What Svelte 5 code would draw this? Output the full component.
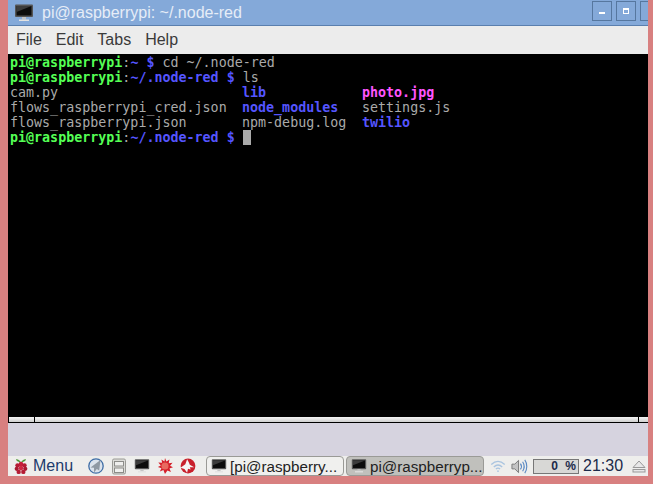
<script>
	const listing = [
		[{ t: 'cam.py' }, { t: 'lib', c: 'dir' }, { t: 'photo.jpg', c: 'img' }],
		[{ t: 'flows_raspberrypi_cred.json' }, { t: 'node_modules', c: 'dir' }, { t: 'settings.js' }],
		[{ t: 'flows_raspberrypi.json' }, { t: 'npm-debug.log' }, { t: 'twilio', c: 'dir' }]
	];
</script>

{#snippet monitor(w)}
	<svg width={w} height={w} viewBox="0 0 20 20">
		<rect x="1" y="1.500" width="18" height="12.500" rx="1" fill="#555" />
		<rect x="2.500" y="3" width="15" height="9.500" fill="#0c0c0c" />
		<path d="M2.500 3h15l-15 6z" fill="#3c3c3c" />
		<rect x="8" y="14" width="4" height="2.500" fill="#c4c4c4" />
		<rect x="5" y="16.500" width="10" height="1.500" fill="#e2e2e2" />
	</svg>
{/snippet}

<div class="desktop">
	<div class="window">
		<header class="titlebar">
			<span class="title-icon">{@render monitor(20)}</span>
			<span class="title">pi@raspberrypi: ~/.node-red</span>
			<div class="win-buttons">
				<button class="win-btn" aria-label="Minimize"><span class="min"></span></button>
				<button class="win-btn" aria-label="Maximize"><span class="max"></span></button>
				<button class="win-btn" aria-label="Close"><span class="close"></span></button>
			</div>
		</header>
		<nav class="menubar">
			<span>File</span>
			<span>Edit</span>
			<span>Tabs</span>
			<span>Help</span>
		</nav>
		<div class="terminal">
			<div class="line"><b class="green">pi@raspberrypi</b>:<b class="dir">~ $</b> cd ~/.node-red</div>
			<div class="line"><b class="green">pi@raspberrypi</b>:<b class="dir">~/.node-red $</b> ls</div>
			{#each listing as row}
				<div class="line cols">
					{#each row as cell}
						<span class={cell.c}>{cell.t}</span>
					{/each}
				</div>
			{/each}
			<div class="line"><b class="green">pi@raspberrypi</b>:<b class="dir">~/.node-red $</b> <span class="cursor"></span></div>
		</div>
		<div class="strip">
			<div class="cell first"></div>
			<div class="cell middle"></div>
			<div class="cell last"></div>
		</div>
	</div>
	<div class="gap"></div>
	<footer class="panel">
		<div class="menu-btn">
			<svg class="berry" width="14" height="17" viewBox="0 0 18 21">
				<path d="M9 5C7 1.500 3.500.500 2.500 1.500c1 2.500 3.500 3.500 6.500 3.500zM9 5c2-3.500 5.500-4.500 6.500-3.500-1 2.500-3.500 3.500-6.500 3.500z" fill="#4f9a3a" />
				<circle cx="9" cy="7.500" r="3" fill="#c5203a" />
				<circle cx="4.500" cy="9" r="2.800" fill="#b51c34" />
				<circle cx="13.500" cy="9" r="2.800" fill="#b51c34" />
				<circle cx="9" cy="12.500" r="3" fill="#cf2a42" />
				<circle cx="3.500" cy="13.500" r="2.700" fill="#a81a30" />
				<circle cx="14.500" cy="13.500" r="2.700" fill="#a81a30" />
				<circle cx="6" cy="17.500" r="2.800" fill="#b51c34" />
				<circle cx="12" cy="17.500" r="2.800" fill="#b51c34" />
			</svg>
			<span>Menu</span>
		</div>
		<div class="launchers">
			<svg width="16" height="16" viewBox="0 0 16 16">
				<circle cx="8" cy="8" r="7.200" fill="#dbe3ec" stroke="#3f6ea6" stroke-width="1.300" />
				<path d="M12.500 2L2.500 9.500l3.500.3L6 14.500l2.800-3.500 2.400 1.500z" fill="#8f99a3" />
			</svg>
			<svg width="16" height="17" viewBox="0 0 16 17">
				<rect x="1.500" y="1" width="13" height="15" rx="1.500" fill="#dcdcd8" stroke="#9a9a96" />
				<rect x="3.500" y="3.500" width="9" height="4.500" fill="#efefed" stroke="#8c8c88" />
				<rect x="3.500" y="10" width="9" height="4.500" fill="#efefed" stroke="#8c8c88" />
			</svg>
			{@render monitor(16)}
			<svg width="16" height="16" viewBox="0 0 18 18">
				<path d="M9 0l1.600 4 3.400-2.400-.8 4.200 4.300-.4-2.800 3.300 3.300 1.800-4 1.300 1.700 3.900-4-1.700L9 18l-1.800-4.400-4 1.700L5 11.400 1 10.100l3.300-1.800L1.500 5l4.300.4L5 1.600 8.400 4z" fill="#d5202a" />
				<circle cx="9" cy="9" r="4" fill="#e86a60" />
			</svg>
			<svg width="16" height="16" viewBox="0 0 18 18">
				<circle cx="9" cy="9" r="8.300" fill="#c8202c" />
				<path d="M.6 11L6 7l2-5.500L10 5l1 2.500 5 3-5 0 1 2.500-3-1-1 4.500-3-4z" fill="#f4f4f4" />
			</svg>
		</div>
		<div class="tasks">
			<div class="task"><span class="task-icon">{@render monitor(16)}</span><span class="task-label">[pi@raspberry...</span></div>
			<div class="task active"><span class="task-icon">{@render monitor(16)}</span><span class="task-label">pi@raspberryp...</span></div>
		</div>
		<div class="tray">
			<svg width="16" height="15" viewBox="0 0 19 16" fill="none" stroke="#a9c4e0" stroke-width="1.600">
				<path d="M1.500 5.500c5-4.500 11-4.500 16 0M4.500 8.500c3-2.700 7-2.700 10 0M7 11c1.500-1.300 3.500-1.300 5 0" />
				<circle cx="9.500" cy="13.500" r="1" fill="#a9c4e0" stroke="none" />
			</svg>
			<svg class="vol" width="17" height="17" viewBox="0 0 18 17" fill="none">
				<path d="M1 6h3l4-4v13l-4-4H1z" fill="#c4c4c4" stroke="#777" />
				<path d="M10 5.500c1.300 1.800 1.300 4.200 0 6M12.300 3.500c2 3 2 7 0 10M14.600 1.500c2.800 4 2.800 10 0 14" stroke="#5b8ac4" stroke-width="1.200" />
			</svg>
			<div class="cpu">0 %</div>
			<span class="clock">21:30</span>
			<svg class="eject" width="14" height="13" viewBox="0 0 14 13">
				<path d="M7 1l6 6.500H1z" fill="#e8e8e8" stroke="#999" />
				<rect x="1" y="9.500" width="12" height="2.500" fill="#e8e8e8" stroke="#999" />
			</svg>
		</div>
	</footer>
</div>

<style>
	:global(body) {
		margin: 0;
	}

	.desktop {
		width: 653px;
		height: 484px;
		box-sizing: border-box;
		background: #d88080;
		padding: 0 5px 8px 8px;
		display: flex;
		flex-direction: column;
		overflow: hidden;
		font-family: "Liberation Sans", Arial, sans-serif;
	}

	.window {
		display: flex;
		flex-direction: column;
	}

	.titlebar {
		height: 25px;
		background: #84a9d9;
		border-bottom: 1px solid #5a7fae;
		display: flex;
		align-items: center;
		padding-left: 6px;
		color: #e6edf7;
		font-size: 16px;
		overflow: hidden;
	}

	.title-icon {
		display: flex;
		margin-right: 8px;
	}

	.title {
		flex: 1;
		white-space: nowrap;
	}

	.win-buttons {
		display: flex;
		gap: 4px;
		align-self: flex-start;
		margin-top: 1px;
		margin-right: -12px;
		flex: none;
	}

	.win-btn {
		width: 20px;
		height: 20px;
		padding: 0;
		background: transparent;
		border: 1px solid #56779f;
		display: flex;
		align-items: center;
		justify-content: center;
	}

	.min {
		width: 6px;
		height: 2px;
		margin-top: 4px;
		background: #fff;
	}

	.max {
		width: 4px;
		height: 3px;
		border: 1px solid #fff;
		border-top-width: 2px;
	}

	.close {
		width: 2px;
		height: 6px;
		background: #fff;
	}

	.menubar {
		height: 28px;
		background: #ececec;
		display: flex;
		align-items: center;
		gap: 14px;
		padding-left: 8px;
		font-size: 16px;
		color: #3a3a3a;
	}

	.terminal {
		height: 363px;
		background: #000;
		box-sizing: border-box;
		padding: 1px 0 0 2px;
		font-family: "DejaVu Sans Mono", monospace;
		font-size: 13.33px;
		line-height: 15px;
		color: #aaa;
	}

	.line {
		height: 15px;
		white-space: pre;
	}

	.cols {
		display: grid;
		grid-template-columns: 232px 120px auto;
	}

	.green {
		color: #55ff55;
	}

	.dir {
		color: #5555ff;
		font-weight: bold;
	}

	.img {
		color: #ff55ff;
		font-weight: bold;
	}

	.cursor {
		display: inline-block;
		width: 8px;
		height: 15px;
		background: #aaa;
		vertical-align: top;
	}

	.strip {
		height: 6px;
		display: flex;
		box-sizing: border-box;
		border-bottom: 1px solid #000;
		border-left: 1px solid #000;
		background: linear-gradient(#f4f4f4, #cfcfcf);
	}

	.cell {
		box-sizing: border-box;
		border-right: 1px solid #000;
	}

	.first {
		width: 26px;
	}

	.middle {
		flex: 1;
	}

	.last {
		width: 9px;
		border-right: none;
	}

	.gap {
		flex: 1;
		background: #d6d3df;
	}

	.panel {
		height: 20px;
		background: #eeeeec;
		display: flex;
		align-items: center;
		font-size: 16px;
		color: #1c3c6c;
	}

	.menu-btn {
		display: flex;
		align-items: center;
		gap: 5px;
		padding-left: 6px;
		width: 72px;
		box-sizing: border-box;
		flex: none;
	}

	.berry {
		flex: none;
	}

	.launchers {
		display: flex;
		align-items: center;
		gap: 7px;
		padding-left: 8px;
		flex: none;
	}

	.tasks {
		display: flex;
		gap: 2px;
		margin-left: 10px;
		flex: none;
	}

	.task {
		width: 138px;
		height: 20px;
		box-sizing: border-box;
		border: 1px solid #9a9a96;
		border-radius: 4px;
		background: #f0f0ee;
		display: flex;
		align-items: center;
		gap: 3px;
		padding-left: 4px;
		color: #222;
		font-size: 15.2px;
		white-space: nowrap;
		overflow: hidden;
	}

	.task.active {
		background: #c0c0bc;
	}

	.task-icon {
		display: flex;
	}

	.tray {
		display: flex;
		align-items: center;
		margin-left: 6px;
		flex: 1;
	}

	.vol {
		margin-left: 5px;
	}

	.cpu {
		width: 46px;
		height: 15px;
		box-sizing: border-box;
		margin-left: 5px;
		border: 1px solid #777;
		background: #d8d8d6;
		font-size: 12px;
		font-weight: bold;
		word-spacing: 4px;
		text-align: right;
		padding-right: 2px;
		line-height: 13px;
		color: #1b2a4a;
	}

	.clock {
		margin-left: 4px;
		color: #1b2a4a;
	}

	.eject {
		margin-left: 9px;
		flex: none;
	}
</style>
